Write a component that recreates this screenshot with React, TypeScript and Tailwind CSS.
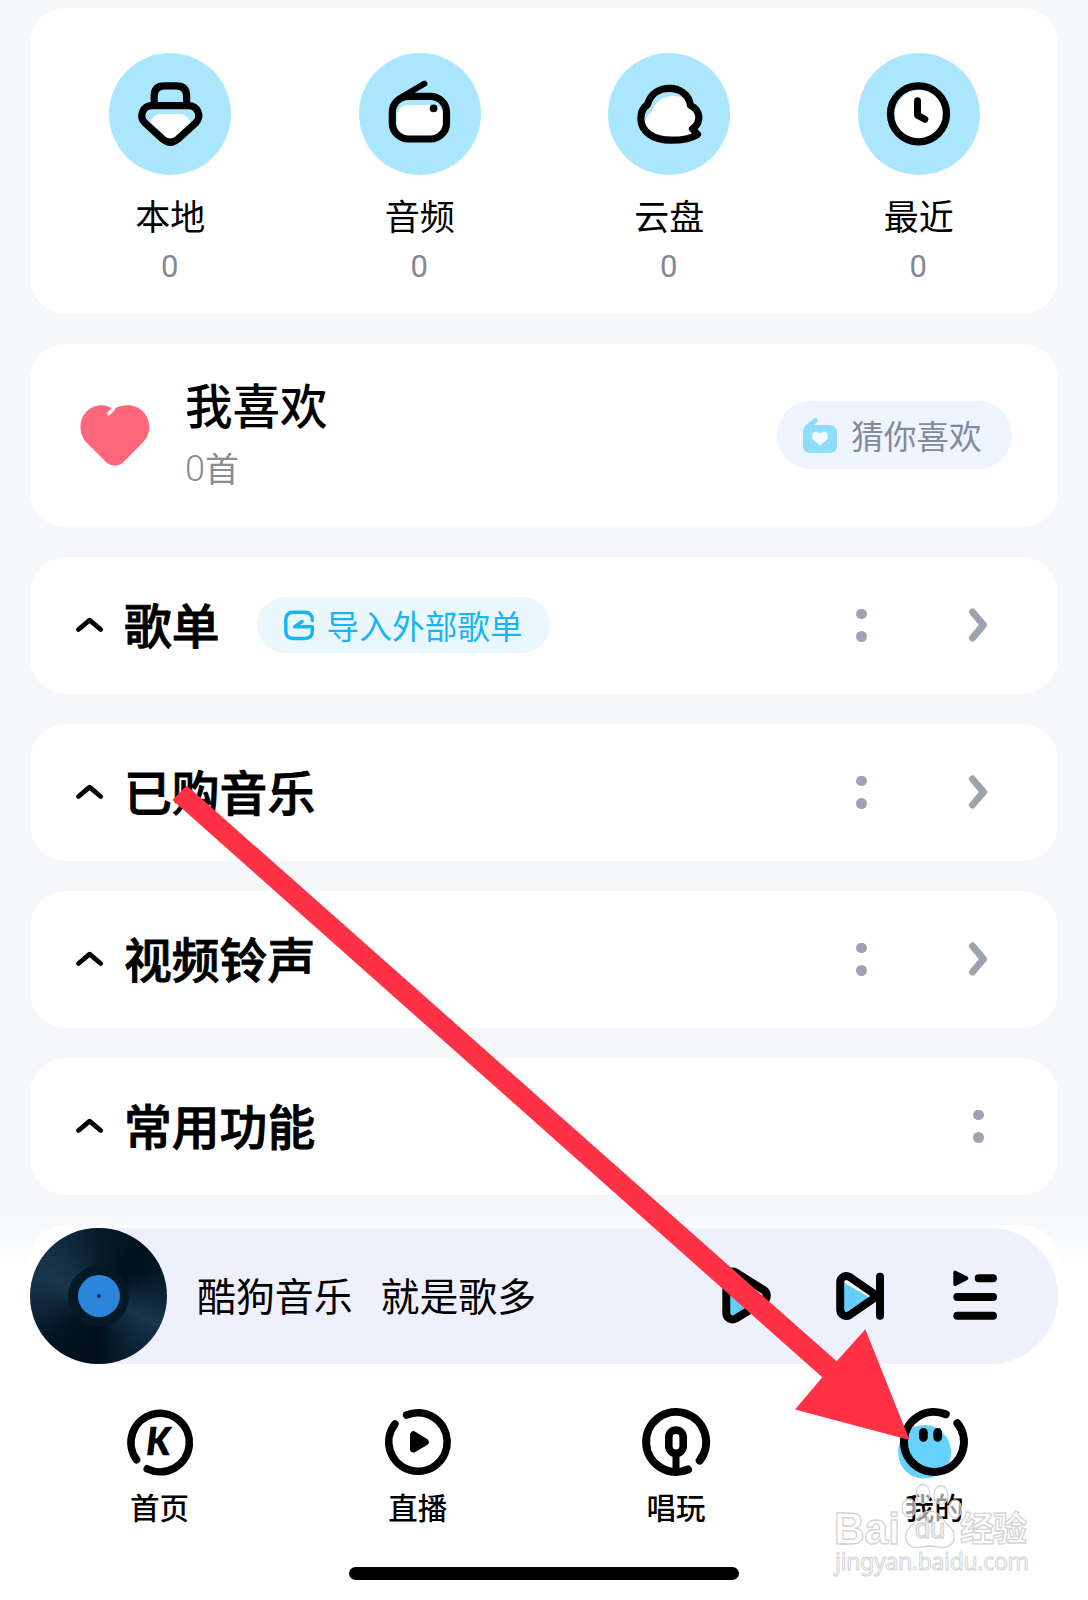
import type { ReactNode } from "react";

const SKY = "#62cffa";

function LocalIcon() {
  return (
    <svg viewBox="109 53 122 122" className="size-full" fill="none" stroke="#000" strokeWidth="7.2" strokeLinejoin="round">
      <path d="M154.2 105V96q0-10.200 10.200-10.200h12q10.200 0 10.200 10.200v9" />
      <path d="M161 114h18.500q6 0 9.500 5.500l2 4L177 137q-6.500 5.500-13 0L149.500 123.500l2-4q3-5.500 9.500-5.500z" fill="#fff" stroke="none" />
      <path d="M152 105.600h36.500c9.500 0 13.500 11 7 17.500L178 139q-7.700 6.400-15.400 0L145.200 123.100c-6.700-6.500-2.700-17.500 6.800-17.500z" />
    </svg>
  );
}

function RadioIcon() {
  return (
    <svg viewBox="359.200 53 122 122" className="size-full" fill="none" stroke="#000" strokeLinecap="round">
      <rect x="397" y="105" width="47" height="32" rx="11" fill="#fff" stroke="none" />
      <rect x="392.500" y="96.300" width="54.200" height="42.700" rx="16" strokeWidth="7.200" />
      <path d="M403.500 96 424.600 83.700" strokeWidth="6" />
      <circle cx="433.800" cy="108.300" r="3.900" fill="#000" stroke="none" />
    </svg>
  );
}

const CLOUD =
  "M647.500 104.500c3-10.500 11.500-16.100 22-16.100s19.500 6.100 21 17c10 5 11.500 16.500 2 23.500l5 5.500c-7 4.600-16 5.800-26.500 5.800-17 0-30.200-8.200-30.200-21.700 0-6 2.700-11 6.700-14z";

function CloudIcon() {
  return (
    <svg viewBox="608 53 122 122" className="size-full" fill="none" strokeLinejoin="round">
      <clipPath id="cloud-body">
        <path d={CLOUD} />
      </clipPath>
      <g clipPath="url(#cloud-body)">
        <path d={CLOUD} fill="#fff" transform="translate(4 7.500)" />
      </g>
      <path d={CLOUD} stroke="#000" strokeWidth="7.200" />
    </svg>
  );
}

function ClockIcon() {
  return (
    <svg viewBox="858 53 122 122" className="size-full" fill="none" stroke="#000" strokeLinecap="round" strokeLinejoin="round">
      <circle cx="919.600" cy="115" r="24.800" fill="#fff" stroke="none" />
      <circle cx="918.500" cy="113.800" r="28" strokeWidth="7.300" />
      <path d="M917.500 100.800v14.400l7.300 4" strokeWidth="7" />
    </svg>
  );
}

function Dots() {
  return (
    <span className="flex w-[11px] flex-col items-center gap-3">
      <span className="size-[10.500px] rounded-full bg-[#9ba4af]" />
      <span className="size-[10.500px] rounded-full bg-[#9ba4af]" />
    </span>
  );
}

function Row({ title, more = true, children }: { title: string; more?: boolean; children?: ReactNode }) {
  return (
    <section className="flex h-[137px] shrink-0 items-center rounded-[36px] bg-white pr-[69px] pb-px pl-[45px]">
      <svg viewBox="0 0 30 18" className="h-[18px] w-[30px]" fill="none" stroke="#000" strokeWidth="4.800" strokeLinecap="round" strokeLinejoin="round">
        <path d="M3.500 13.500 14.600 4.200 25.700 13.500" />
      </svg>
      <h2 className="ml-[19px] pb-[2px] text-[47.800px] leading-[60px] font-medium [-webkit-text-stroke:0.9px_#000]">{title}</h2>
      {children}
      <div className="ml-auto flex items-center">
        <Dots />
        {more && (
          <svg viewBox="0 0 22 36" className="ml-[100px] h-[36px] w-[22px]" fill="none" stroke="#9ba4af" strokeWidth="7" strokeLinecap="round" strokeLinejoin="round">
            <path d="M5.500 5 16.500 18 5.500 31" />
          </svg>
        )}
        {!more && <span className="w-[5px]" />}
      </div>
    </section>
  );
}

function Disc() {
  return (
    <span className="flex h-[136px] w-[137px] shrink-0 items-center justify-center rounded-full bg-[conic-gradient(from_0deg,#071c2b,#00101c_45deg,#031522_65deg,#17354c_115deg,#0d2639_140deg,#020f1a_180deg,#03131f_225deg,#0c2335_255deg,#1a364c_290deg,#132d42_320deg,#071c2b)]">
      <span className="flex size-[61px] items-center justify-center rounded-full bg-[#061826]">
        <span className="flex size-[42px] items-center justify-center rounded-full bg-[#2b86d9]">
          <span className="size-[4px] rounded-full bg-[#0d2d50]" />
        </span>
      </span>
    </span>
  );
}

function HomeIcon() {
  return (
    <svg viewBox="124.700 1405.700 72 76" className="h-[76px] w-[72px]" fill="none">
      <path d="M137.200 1459.400A29.200 29.200 0 1 1 148 1468.500" stroke="#000" strokeWidth="7.600" strokeLinecap="round" />
      <text x="147" y="1455" fontSize="37" fontWeight="900" fontStyle="italic" fontFamily="Lato, 'Liberation Sans', sans-serif" fill="#000" stroke="#000" strokeWidth="0.600">K</text>
    </svg>
  );
}

function LiveIcon() {
  return (
    <svg viewBox="381.700 1405.700 72 76" className="h-[76px] w-[72px]" fill="none" stroke="#000" strokeLinecap="round" strokeLinejoin="round">
      <path d="M394.600 1423.800A29.200 29.200 0 1 0 406.300 1414.800" strokeWidth="7.600" />
      <path d="M413.200 1434.500v14.300L425 1441.700z" fill="#000" strokeWidth="7" />
    </svg>
  );
}

function SingIcon() {
  return (
    <svg viewBox="640 1405.700 72 76" className="h-[76px] w-[72px]" fill="none" stroke="#000" strokeLinecap="round">
      <path d="M699.700 1460.200A30 30 0 1 0 688 1469.200" strokeWidth="8" />
      <rect x="668.800" y="1429.800" width="14.400" height="23.200" rx="7.200" strokeWidth="7.600" />
      <path d="M676 1456v14" strokeWidth="7" />
    </svg>
  );
}

function MineIcon() {
  return (
    <svg viewBox="898.300 1405.700 72 76" className="h-[76px] w-[72px] overflow-visible" fill="none" stroke="#000" strokeLinecap="round">
      <path d="M925 1424.700c15 0 26.500 13 26.500 28 0 6-2 10-7 14-5 8-11 11.500-20 11.500-15 0-26-11.500-26-26.500s11.500-27 26.500-27z" fill="#66d2fc" stroke="none" />
      <path d="M957.700 1422.900A30 30 0 1 1 946 1414" strokeWidth="8" />
      <path d="M923.700 1432v5M938 1432v5" strokeWidth="8.700" />
    </svg>
  );
}

const shortcuts = [
  { label: "本地", icon: <LocalIcon /> },
  { label: "音频", icon: <RadioIcon /> },
  { label: "云盘", icon: <CloudIcon /> },
  { label: "最近", icon: <ClockIcon /> },
];

const tabs = [
  { label: "首页", icon: <HomeIcon /> },
  { label: "直播", icon: <LiveIcon /> },
  { label: "唱玩", icon: <SingIcon /> },
  { label: "我的", icon: <MineIcon /> },
];

function Watermark() {
  return (
    <div className="absolute top-[1480px] left-[830px] w-[205px] text-white opacity-90" aria-hidden="true">
      <svg viewBox="0 0 205 100" className="h-[100px] w-[205px] overflow-visible" fill="#fff" stroke="#d0d0d0" strokeWidth="1.300" strokeLinejoin="round">
        <g fillOpacity="0.65">
          <ellipse cx="93" cy="14" rx="7" ry="9.500" />
          <ellipse cx="111" cy="15" rx="7" ry="9.500" />
          <ellipse cx="79" cy="28" rx="7" ry="9" />
          <ellipse cx="125" cy="29" rx="6.500" ry="9" />
          <path d="M100 31c10 0 12 9 19 15 7 6 7 16 0 20-6 4-12 0-19 0s-13 4-19 0c-7-4-7-14 0-20 7-6 9-15 19-15z" />
        </g>
        <g fontFamily="'Liberation Sans', sans-serif" fontWeight="700">
          <text x="4" y="64" fontSize="44" textLength="66" lengthAdjust="spacingAndGlyphs">Bai</text>
          <text x="85" y="58" fontSize="27" fontWeight="400" textLength="30">du</text>
        </g>
        <text x="130" y="61" fontSize="34" fontWeight="700" fontFamily="'Noto Sans CJK SC', sans-serif" textLength="67">经验</text>
        <text x="5" y="90" fontSize="23" fontFamily="'Noto Sans', sans-serif" textLength="194" strokeWidth="1">jingyan.baidu.com</text>
      </svg>
    </div>
  );
}

export default function App() {
  return (
    <div className="relative flex h-[1600px] w-[1088px] flex-col overflow-hidden bg-[#f5f7fb] font-['Noto_Sans_CJK_SC',sans-serif] text-black">
      <main className="flex flex-col gap-[30px] px-[30px] pt-2">
        <section className="grid h-[306px] grid-cols-4 rounded-[36px] bg-white pt-[45px] pr-[14.500px] pl-[15.500px]">
          {shortcuts.map((s) => (
            <div key={s.label} className="flex flex-col items-center">
              <span className="size-[122px] rounded-full bg-[#aae7fe]">{s.icon}</span>
              <span className="mt-[15px] text-[35px] leading-[50px]">{s.label}</span>
              <span className="mt-[2px] mr-px font-[Roboto,sans-serif] text-[31px] leading-[50px] text-[#828896]">0</span>
            </div>
          ))}
        </section>

        <section className="flex h-[183px] items-center rounded-[36px] bg-white pr-[46px] pb-px pl-[50px]">
          <svg viewBox="80 405 70 61" className="h-[61px] w-[70px]" fill="none">
            <path d="M113.300 409.500C117.500 406.500 122 405.300 128 405.300c12 0 21.300 10 21.300 21.700 0 6-2.300 11-6 15l-19 19.300c-5.500 5.800-13.500 5.800-19 0L86.500 442.500c-3.700-4-6-9-6-15.500 0-12 9.300-21.700 21-21.700 4 0 8 1 11.800 4.200z" fill="#ff667b" />
            <path d="M113.500 408.800 108.700 413.800" stroke="#fff" strokeWidth="3.400" strokeLinecap="round" />
          </svg>
          <div className="ml-[35px] flex flex-col pt-[2px]">
            <h2 className="text-[47.500px] leading-[62px] font-medium">我喜欢</h2>
            <p className="mt-px flex items-center text-[34px] leading-[62px] text-[#868c99]">
              <span className="pt-[2px] font-[Roboto,sans-serif] text-[36px] font-light">0</span>首
            </p>
          </div>
          <button className="ml-auto flex h-[68px] w-[235px] items-center rounded-full bg-[#eef5fe] pl-[25px] text-[32.700px] text-[#838a98]">
            <svg viewBox="802 416 36 38" className="h-[38px] w-[36px]" fill="#8eddfc">
              <rect x="803" y="425" width="34" height="28" rx="7" />
              <path d="M807 427.500 815.500 420.500" stroke="#8eddfc" strokeWidth="5" strokeLinecap="round" />
              <path d="M820 433.700c4-4 9-1 8 3.500-.5 3-4.500 5.300-8 8.200-3.500-2.900-7.500-5.200-8-8.200-1-4.500 4-7.500 8-3.500z" fill="#f2fbff" />
            </svg>
            <span className="ml-[13px] whitespace-nowrap">猜你喜欢</span>
          </button>
        </section>

        <Row title="歌单">
          <button className="ml-[37px] flex h-14 w-[293px] items-center rounded-full bg-[#eaf8fe] pl-[26px] text-[32.700px] text-[#19b5f3]">
            <svg viewBox="282.500 609 33 33" className="size-[33px]" fill="none" stroke="#19b5f3" strokeWidth="3.400" strokeLinecap="round" strokeLinejoin="round">
              <path d="M311.800 620.500v-.5q0-7.800-7.800-7.800h-11q-7.700 0-7.700 7.800v11q0 7.500 7.700 7.500h11q7.800 0 7.800-7.500v-4.300h-17.500l7.300-5.200" />
            </svg>
            <span className="ml-[11px] pb-px whitespace-nowrap">导入外部歌单</span>
          </button>
        </Row>
        <Row title="已购音乐" />
        <Row title="视频铃声" />
        <Row title="常用功能" more={false} />
      </main>

      <footer className="flex flex-1 flex-col bg-[linear-gradient(to_bottom,#f5f7fb_0px,#f5f7fb_20px,#ffffff_80px)] pt-[30px]">
        <div className="mx-[30px] rounded-t-[36px] bg-white pt-[3px]">
          <div className="flex h-[136px] items-center rounded-full bg-[#eef1fb]">
            <Disc />
            <p className="ml-[30px] flex gap-[28px] pb-[3px] text-[38.900px] whitespace-nowrap">
              <span>酷狗音乐</span>
              <span>就是歌多</span>
            </p>
            <svg viewBox="720 1266 52 60" className="ml-auto h-[60px] w-[52px]" fill="none" strokeLinejoin="round">
              <path d="M729 1284l33 14-33 20z" fill={SKY} />
              <path d="M726.300 1278c0-5 5-8 9.500-5.500l28 17.500c4 3 4 8.500 0 11.500l-28 17c-4.500 2.500-9.500-.500-9.500-5.500z" stroke="#000" strokeWidth="8" />
            </svg>
            <svg viewBox="834 1268 52 56" className="ml-[62px] h-[56px] w-[52px]" fill="none" strokeLinejoin="round" strokeLinecap="round">
              <path d="M842 1278l33 18-33 18z" fill="#fff" />
              <path d="M842 1281.500l27.500 16-27.500 17z" fill={SKY} />
              <path d="M840.200 1282.500c0-5.500 5.500-8 9.500-5.500l27.500 19-27.500 19c-4 2.500-9.500 0-9.500-5.500z" stroke="#000" strokeWidth="8" />
              <path d="M880 1276.700v39" stroke="#000" strokeWidth="8" />
            </svg>
            <svg viewBox="951 1268 48 56" className="mr-[59px] ml-[65px] h-[56px] w-[48px]" fill="none" stroke="#000" strokeLinejoin="round" strokeLinecap="round">
              <path d="M955.300 1272.700v11.300l11-5.700z" fill="#000" strokeWidth="4" />
              <path d="M978.700 1278.300H993M957.300 1297H993M957.300 1315.700H993" strokeWidth="8" />
            </svg>
          </div>
        </div>
        <nav className="mt-[41.500px] grid grid-cols-4 pr-[24.500px] pl-[30.500px]">
          {tabs.map((t) => (
            <div key={t.label} className="flex flex-col items-center">
              {t.icon}
              <span className="mt-[2px] text-[29.500px] leading-[44px] font-medium">{t.label}</span>
            </div>
          ))}
        </nav>
        <div className="mx-auto mt-auto mb-5 h-[13px] w-[390px] rounded-full bg-black" />
      </footer>

      <svg viewBox="0 0 1088 1600" className="pointer-events-none absolute inset-0 size-full" aria-hidden="true">
        <path d="M186.700 785.500 836.700 1361.300 865.300 1329.300 909.500 1440 795 1409.500 822.300 1377.300 172.500 800z" fill="#ff3144" />
      </svg>
      <Watermark />
    </div>
  );
}
